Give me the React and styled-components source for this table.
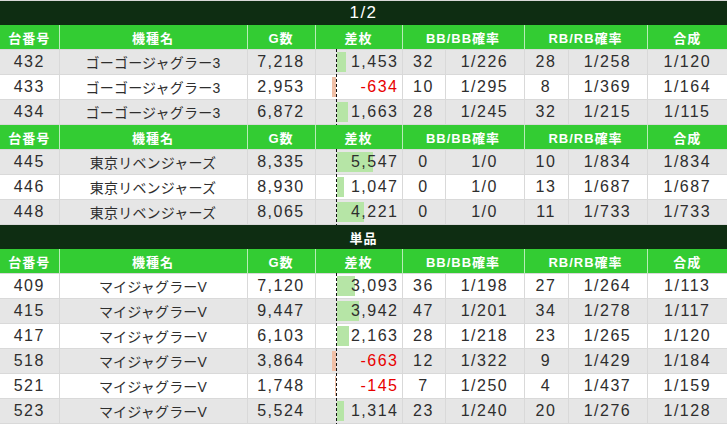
import React from "react";
import styled, { createGlobalStyle } from "styled-components";

const GlobalStyle = createGlobalStyle`
  html, body {
    margin: 0;
    padding: 0;
    background: #ffffff;
  }
`;

const Table = styled.table`
  width: 727px;
  border-collapse: collapse;
  table-layout: fixed;
  font-family: "Liberation Sans", "Noto Sans CJK JP", sans-serif;
`;

const TitleCell = styled.td`
  height: 24px;
  padding: 0;
  background: #0e2d12;
  color: #ffffff;
  text-align: center;
  font-weight: ${(p) => (p.$cjk ? "bold" : "normal")};
  font-size: ${(p) => (p.$cjk ? "13px" : "17px")};
  letter-spacing: ${(p) => (p.$cjk ? "1px" : "1.5px")};
  border-top: 1px solid #d8d8d8;
`;

const HeadCell = styled.th`
  height: 24px;
  padding: 0;
  background: #33cc33;
  color: #ffffff;
  font-size: 13px;
  font-weight: bold;
  letter-spacing: 1px;
  text-align: center;
  border: 1px solid #b8ecb8;
  border-top: none;
  border-bottom: none;
  &:first-child { border-left: none; }
  &:last-child { border-right: none; }
`;

const Row = styled.tr`
  background: ${(p) => (p.$shade ? "#e6e6e6" : "#ffffff")};
`;

const Cell = styled.td`
  height: 24px;
  padding: 0;
  color: #2e2e2e;
  font-size: 16px;
  letter-spacing: 1.5px;
  text-align: center;
  white-space: nowrap;
  border: 1px solid #d9d9d9;
  &:first-child { border-left: none; }
  &:last-child { border-right: none; }
`;

const NameCell = styled(Cell)`
  font-size: 14px;
  letter-spacing: 0.2px;
`;

const DiffCell = styled(Cell)`
  position: relative;
  text-align: right;
  padding-right: 3px;
  color: ${(p) => (p.$neg ? "#e80000" : "#2e2e2e")};

  &::before {
    content: "";
    position: absolute;
    left: 20px;
    top: -1px;
    bottom: -1px;
    width: 1px;
    background: repeating-linear-gradient(to bottom, #111 0 3px, transparent 3px 5px);
  }
`;

const Bar = styled.span`
  position: absolute;
  top: 2px;
  bottom: 2px;
  ${(p) => (p.$neg ? "right: calc(100% - 20px);" : "left: 21px;")}
  background: ${(p) => (p.$neg ? "#f0bfa6" : "#b6e5a6")};
`;

const DiffText = styled.span`
  position: relative;
`;

const widths = [59, 188, 68, 87, 43, 79, 44, 79, 80];

const fmt = (n) => (n < 0 ? "-" : "") + Math.abs(n).toLocaleString("en-US");

const Header = () => (
  <tr>
    <HeadCell>台番号</HeadCell>
    <HeadCell>機種名</HeadCell>
    <HeadCell>G数</HeadCell>
    <HeadCell>差枚</HeadCell>
    <HeadCell colSpan={2}>BB/BB確率</HeadCell>
    <HeadCell colSpan={2}>RB/RB確率</HeadCell>
    <HeadCell>合成</HeadCell>
  </tr>
);

const DataRow = ({ r, shade, scale }) => {
  const [no, name, games, diff, bb, bbr, rb, rbr, total] = r;
  const neg = diff < 0;
  return (
    <Row $shade={shade}>
      <Cell>{no}</Cell>
      <NameCell>{name}</NameCell>
      <Cell>{games}</Cell>
      <DiffCell $neg={neg}>
        <Bar $neg={neg} style={{ width: Math.max(1, Math.round(Math.abs(diff) * scale)) }} />
        <DiffText>{fmt(diff)}</DiffText>
      </DiffCell>
      <Cell>{bb}</Cell>
      <Cell>{bbr}</Cell>
      <Cell>{rb}</Cell>
      <Cell>{rbr}</Cell>
      <Cell>{total}</Cell>
    </Row>
  );
};

const GOGO = "ゴーゴージャグラー3";
const TOKYO = "東京リベンジャーズ";
const MY = "マイジャグラーV";

const sections = [
  {
    title: "1/2",
    scale: 0.0065,
    groups: [
      {
        firstShade: true,
        rows: [
          [432, GOGO, "7,218", 1453, 32, "1/226", 28, "1/258", "1/120"],
          [433, GOGO, "2,953", -634, 10, "1/295", 8, "1/369", "1/164"],
          [434, GOGO, "6,872", 1663, 28, "1/245", 32, "1/215", "1/115"],
        ],
      },
      {
        firstShade: true,
        rows: [
          [445, TOKYO, "8,335", 5547, 0, "1/0", 10, "1/834", "1/834"],
          [446, TOKYO, "8,930", 1047, 0, "1/0", 13, "1/687", "1/687"],
          [448, TOKYO, "8,065", 4221, 0, "1/0", 11, "1/733", "1/733"],
        ],
      },
    ],
  },
  {
    title: "単品",
    cjk: true,
    scale: 0.0057,
    groups: [
      {
        firstShade: false,
        rows: [
          [409, MY, "7,120", 3093, 36, "1/198", 27, "1/264", "1/113"],
          [415, MY, "9,447", 3942, 47, "1/201", 34, "1/278", "1/117"],
          [417, MY, "6,103", 2163, 28, "1/218", 23, "1/265", "1/120"],
          [518, MY, "3,864", -663, 12, "1/322", 9, "1/429", "1/184"],
          [521, MY, "1,748", -145, 7, "1/250", 4, "1/437", "1/159"],
          [523, MY, "5,524", 1314, 23, "1/240", 20, "1/276", "1/128"],
        ],
      },
    ],
  },
];

const App = () => (
  <>
    <GlobalStyle />
    <Table>
      <colgroup>
        {widths.map((w, i) => (
          <col key={i} style={{ width: w }} />
        ))}
      </colgroup>
      <tbody>
        {sections.map((s) => (
          <React.Fragment key={s.title}>
            <tr>
              <TitleCell colSpan={9} $cjk={s.cjk}>{s.title}</TitleCell>
            </tr>
            {s.groups.map((g, gi) => (
              <React.Fragment key={gi}>
                <Header />
                {g.rows.map((r, i) => (
                  <DataRow
                    key={r[0]}
                    r={r}
                    scale={s.scale}
                    shade={i % 2 === 0 ? g.firstShade : !g.firstShade}
                  />
                ))}
              </React.Fragment>
            ))}
          </React.Fragment>
        ))}
      </tbody>
    </Table>
  </>
);

export default App;
